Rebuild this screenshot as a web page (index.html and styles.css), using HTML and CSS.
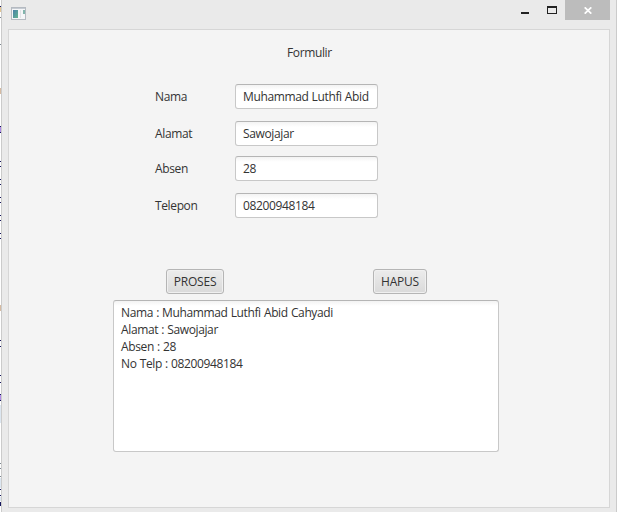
FILE: index.html
```html
<!DOCTYPE html>
<html lang="id">
<head>
<meta charset="utf-8">
<title>Formulir</title>
<link rel="stylesheet" href="styles.css">
</head>
<body>
<div class="desktop">
  <svg class="backdrop" width="1" height="512" shape-rendering="crispEdges">
    <path d="M.5 0V512" stroke="#fff"/>
    <path d="M.5 7v5" stroke="#e3c591"/>
    <path d="M.5 6v1M.5 126v1M.5 132v1M.5 161v1M.5 166v1M.5 179v1M.5 184v1M.5 197v1M.5 202v1M.5 215v1M.5 220v1M.5 233v1M.5 238v1M.5 340v1M.5 346v1M.5 375v1M.5 382v1M.5 394v1M.5 400v1M.5 489v1M.5 495v1M.5 502v4" stroke="#17175e"/>
    <path d="M.5 127v5M.5 395v5" stroke="#b18ce8"/>
    <path d="M.5 17v1M.5 44v1M.5 463v1M.5 468v1M.5 476v1" stroke="#7c8790"/>
    <path d="M.5 88v6M.5 305v6" stroke="#d6bba2"/>
    <path d="M.5 405v18M.5 478v10M.5 497v4" stroke="#dce6f0"/>
  </svg>
  <div class="window">
    <header class="titlebar">
      <svg class="app-icon" width="16" height="14" viewBox="0 0 16 14">
        <defs><linearGradient id="sea" x1="0" y1="0" x2="1" y2="1"><stop stop-color="#4a80a8"/><stop offset="1" stop-color="#63b592"/></linearGradient></defs>
        <rect x=".5" y=".5" width="14" height="12" fill="#f5f6f8" stroke="#b5bac1"/>
        <path d="M1 1.5h13" stroke="#c5cbd2"/>
        <rect x="2" y="3" width="5" height="8" fill="url(#sea)"/>
        <path d="M9.500 3v8" stroke="#e0e3e6"/>
        <rect x="12" y="3" width="2" height="4" fill="#82b5ac"/>
      </svg>
      <div class="controls">
        <svg width="62" height="20" viewBox="0 0 62 20" shape-rendering="crispEdges">
          <rect x="18" y="12" width="8" height="2" fill="#222"/>
          <path d="M44 6h10v8H44zM45 8v5h8V8z" fill="#222" fill-rule="evenodd"/>
        </svg>
        <div class="close">
          <svg width="8" height="7" viewBox="0 0 8 7"><path d="M.7.3l6.600 6.400M7.300.3L.7 6.700" stroke="#fff" stroke-width="1.700"/></svg>
        </div>
      </div>
    </header>
    <main class="pane">
      <h1>Formulir</h1>
      <form class="fields">
        <label for="nama">Nama</label><div class="input" id="nama">Muhammad Luthfi Abid</div>
        <label for="alamat">Alamat</label><div class="input" id="alamat">Sawojajar</div>
        <label for="absen">Absen</label><div class="input" id="absen">28</div>
        <label for="telepon">Telepon</label><div class="input" id="telepon">08200948184</div>
      </form>
      <div class="actions">
        <button class="proses">PROSES</button>
        <button class="hapus">HAPUS</button>
      </div>
      <div class="output">
        <div>Nama : Muhammad Luthfi Abid Cahyadi</div>
        <div>Alamat : Sawojajar</div>
        <div>Absen : 28</div>
        <div>No Telp : 08200948184</div>
      </div>
    </main>
  </div>
</div>
</body>
</html>
```
FILE: styles.css
```css
* { box-sizing: border-box; }
body {
  margin: 0;
  font: 12px/17px "Open Sans", "Noto Sans", sans-serif;
  letter-spacing: -0.37px;
  word-spacing: 0.4px;
  color: #333;
}
.desktop { display: flex; width: 617px; height: 512px; overflow: hidden; }
.backdrop { display: block; flex: none; }
.window {
  width: 616px;
  height: 512px;
  background: #eaeaea;
  border: solid #cbcbcb;
  border-width: 0 1px;
  padding: 0 6px 4px;
}
.titlebar { display: flex; justify-content: space-between; height: 29px; }
.app-icon { margin: 7px 0 0 3px; }
.controls { display: flex; align-items: flex-start; }
.close {
  display: flex;
  justify-content: center;
  align-items: center;
  width: 45px;
  height: 20px;
  background: #bcbcbc;
}
.pane {
  width: 602px;
  height: 479px;
  background: #f4f4f4;
  border: 1px solid #d6d6d6;
}
h1 { margin: 14px 0 0 278px; font: inherit; }
.fields {
  display: grid;
  grid-template-columns: 80px 143px;
  grid-template-rows: 37px 35px 37px 25px;
  margin: 23px 0 0 146px;
}
.fields label { height: 25px; line-height: 25px; }
.input {
  height: 25px;
  padding: 0 7px;
  overflow: hidden;
  line-height: 23px;
  white-space: nowrap;
  background: linear-gradient(#f3f3f3, #fff 5px);
  border: 1px solid #c8c8c8;
  border-top-color: #b5b5b5;
  border-radius: 3px;
}
.actions { display: flex; gap: 149px; margin: 51px 0 0 157px; }
button {
  height: 25px;
  padding: 0;
  font: inherit;
  letter-spacing: -0.2px;
  color: #333;
  background: linear-gradient(#ececec, #dadada);
  border: 1px solid #b5b5b5;
  border-radius: 3px;
  box-shadow: inset 0 0 0 1px #f0f0f0;
}
.proses { width: 58px; }
.hapus { width: 54px; }
.output {
  width: 386px;
  height: 152px;
  margin: 6px 0 0 104px;
  padding: 3px 7px;
  background: linear-gradient(#f3f3f3, #fff 5px);
  border: 1px solid #c8c8c8;
  border-top-color: #b5b5b5;
  border-radius: 3px;
}
```
